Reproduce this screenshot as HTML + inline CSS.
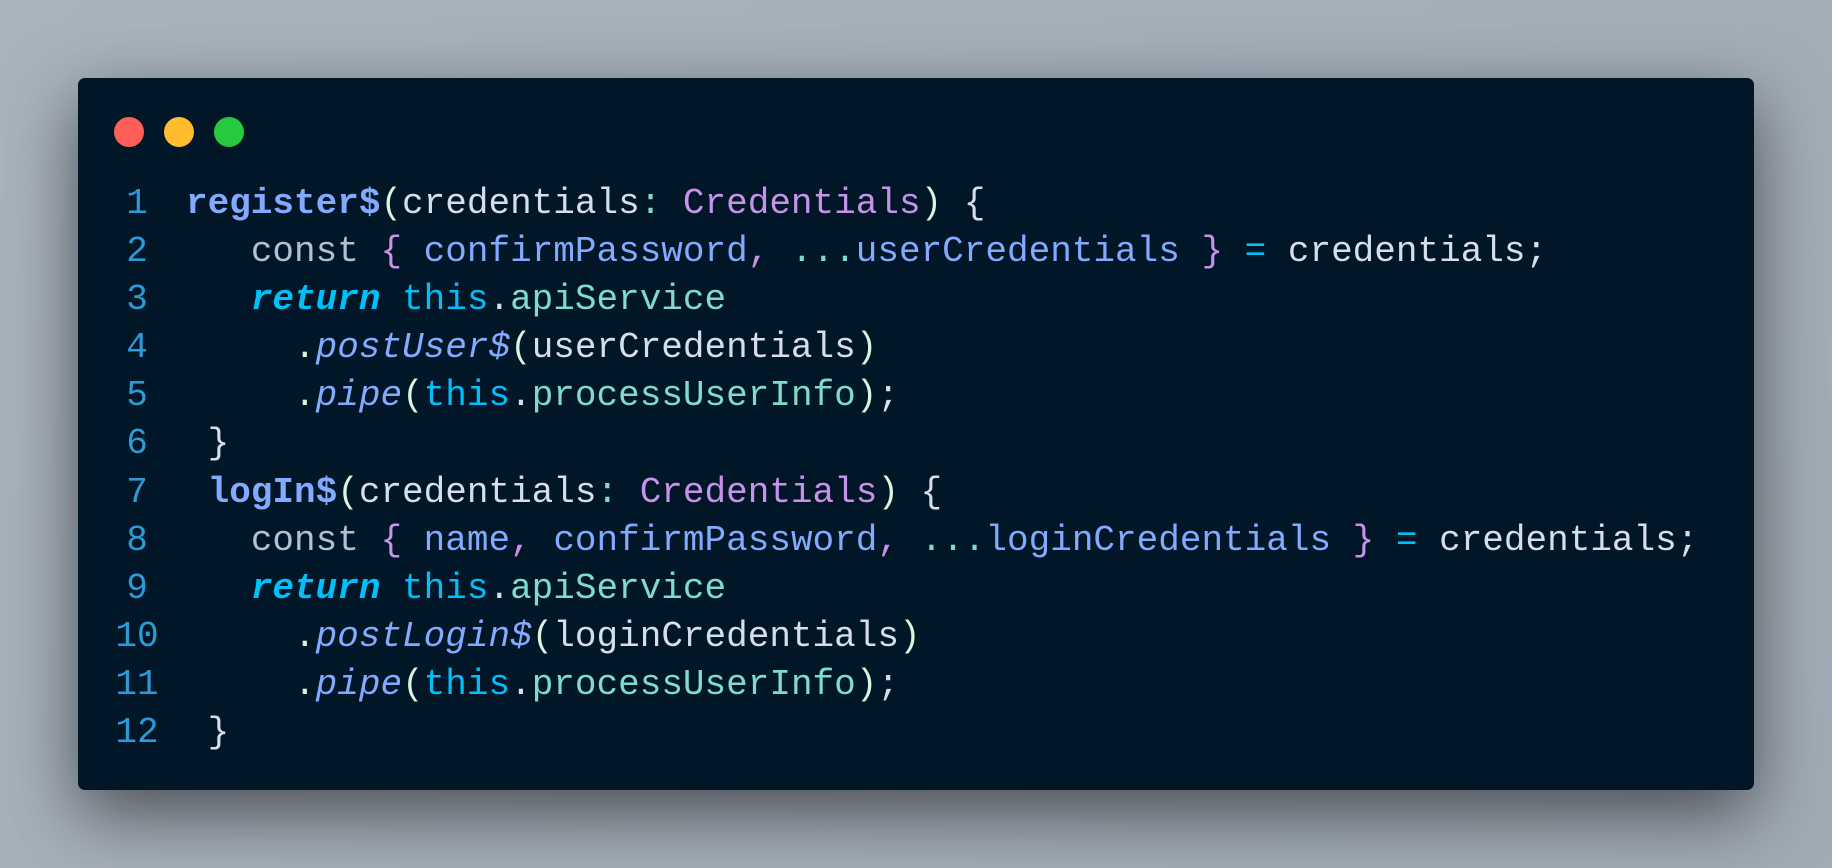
<!DOCTYPE html>
<html><head><meta charset="utf-8"><style>
html,body{margin:0;padding:0;width:1832px;height:868px;overflow:hidden;background:linear-gradient(135deg,#a9b3bd,#a1abb6);}
.win{position:absolute;left:78px;top:78px;width:1676px;height:712px;background:#011627;border-radius:7px;box-shadow:0 24px 70px rgba(0,0,0,0.55);}
.dot{position:absolute;top:117px;width:30px;height:30px;border-radius:50%;}
.code{position:absolute;left:0;top:180px;font-family:"Liberation Mono",monospace;font-size:36px;line-height:48.1px;color:#d6deeb;}
.row{position:relative;height:48.1px;width:1800px}
.ln{position:absolute;left:104px;width:66px;text-align:center;color:#2a9bd6;white-space:pre}
.tx{position:absolute;left:186px;white-space:pre}
.fn{color:#82aaff;font-weight:bold}
.p{color:#d9f5dd}
.c{color:#7fdbca}
.t{color:#c792ea}
.k{color:#b0c0dc}
.v{color:#82aaff}
.r{color:#00bff9;font-weight:bold;font-style:italic}
.th{color:#00bff9}
.m{color:#82aaff;font-style:italic}
.e{color:#00bff9}
</style></head><body>
<div class="win"></div>
<div class="dot" style="left:114px;background:#ff5f56"></div>
<div class="dot" style="left:164px;background:#ffbd2e"></div>
<div class="dot" style="left:214px;background:#27c93f"></div>
<div class="code"><div class="row"><span class="ln">1</span><span class="tx"><span class="fn">register$</span><span class="p">(</span>credentials<span class="c">:</span> <span class="t">Credentials</span><span class="p">)</span> {</span></div><div class="row"><span class="ln">2</span><span class="tx">   <span class="k">const</span> <span class="t">{</span> <span class="v">confirmPassword</span><span class="t">,</span> <span class="c">...</span><span class="v">userCredentials</span> <span class="t">}</span> <span class="e">=</span> credentials;</span></div><div class="row"><span class="ln">3</span><span class="tx">   <span class="r">return</span> <span class="th">this</span>.<span class="c">apiService</span></span></div><div class="row"><span class="ln">4</span><span class="tx">     <span class="p">.</span><span class="m">postUser$</span><span class="p">(</span>userCredentials<span class="p">)</span></span></div><div class="row"><span class="ln">5</span><span class="tx">     <span class="p">.</span><span class="m">pipe</span><span class="p">(</span><span class="th">this</span>.<span class="c">processUserInfo</span><span class="p">)</span>;</span></div><div class="row"><span class="ln">6</span><span class="tx"> }</span></div><div class="row"><span class="ln">7</span><span class="tx"> <span class="fn">logIn$</span><span class="p">(</span>credentials<span class="c">:</span> <span class="t">Credentials</span><span class="p">)</span> {</span></div><div class="row"><span class="ln">8</span><span class="tx">   <span class="k">const</span> <span class="t">{</span> <span class="v">name</span><span class="t">,</span> <span class="v">confirmPassword</span><span class="t">,</span> <span class="c">...</span><span class="v">loginCredentials</span> <span class="t">}</span> <span class="e">=</span> credentials;</span></div><div class="row"><span class="ln">9</span><span class="tx">   <span class="r">return</span> <span class="th">this</span>.<span class="c">apiService</span></span></div><div class="row"><span class="ln">10</span><span class="tx">     <span class="p">.</span><span class="m">postLogin$</span><span class="p">(</span>loginCredentials<span class="p">)</span></span></div><div class="row"><span class="ln">11</span><span class="tx">     <span class="p">.</span><span class="m">pipe</span><span class="p">(</span><span class="th">this</span>.<span class="c">processUserInfo</span><span class="p">)</span>;</span></div><div class="row"><span class="ln">12</span><span class="tx"> }</span></div></div>
</body></html>
